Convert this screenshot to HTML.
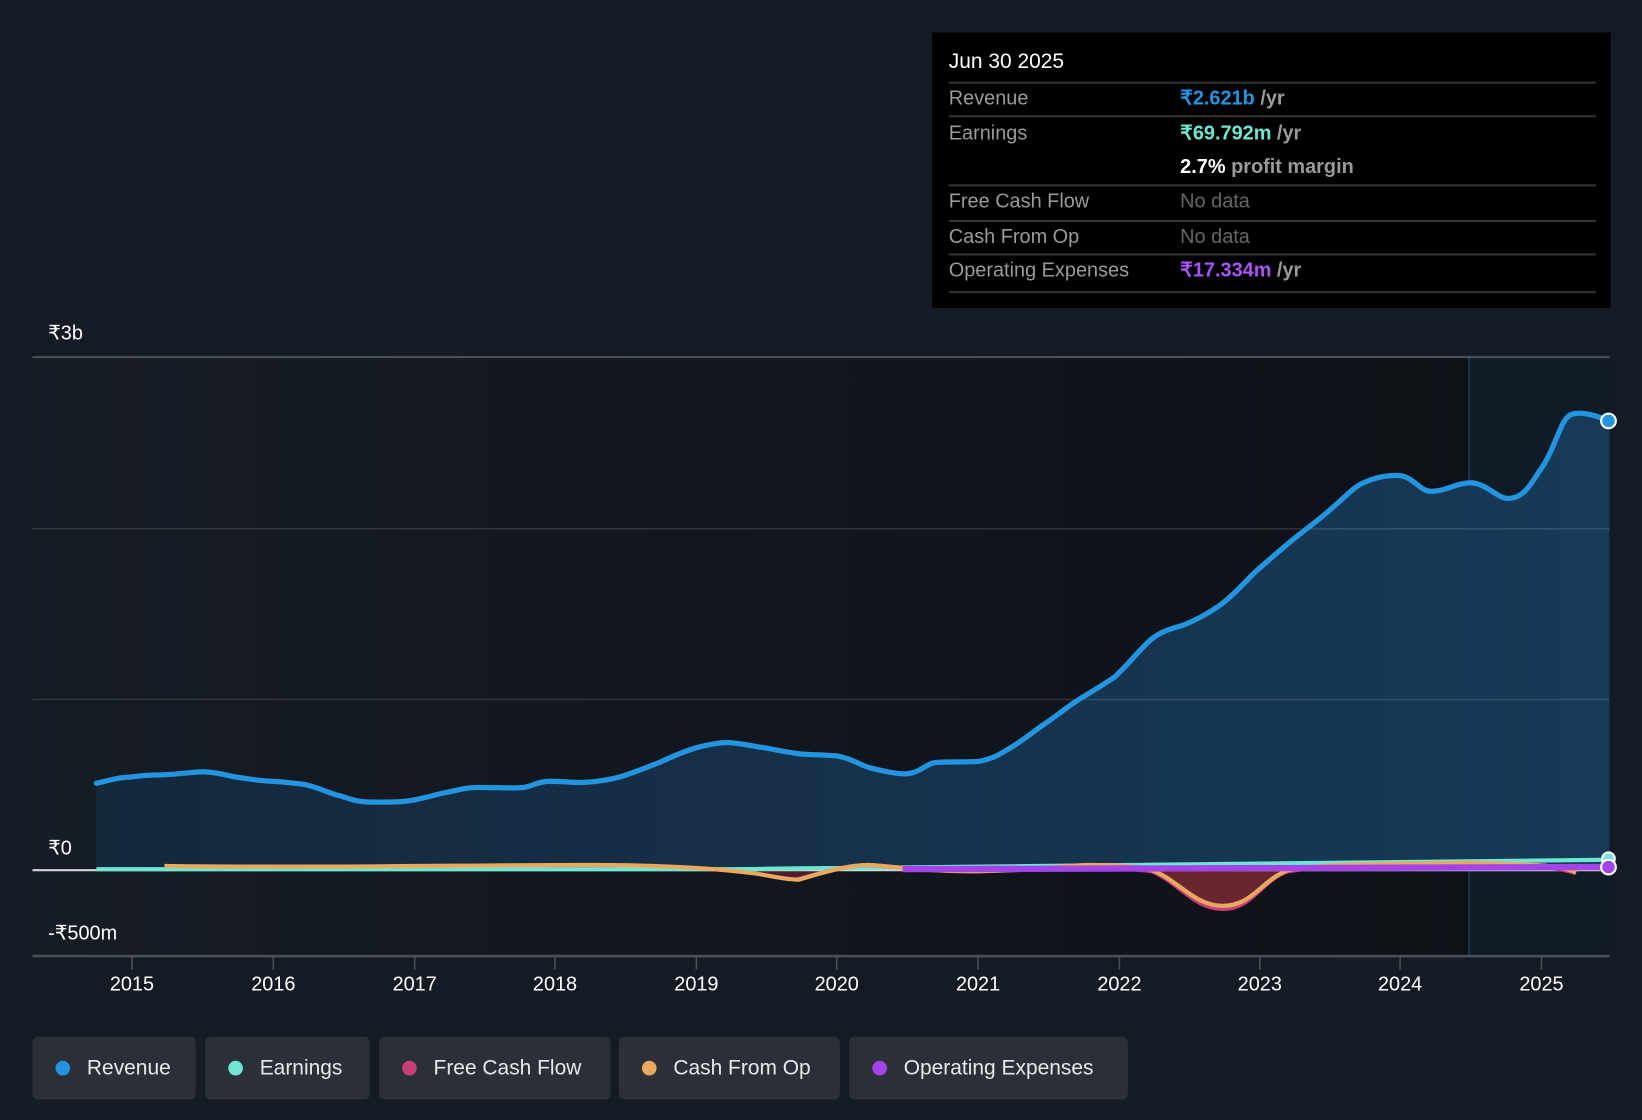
<!DOCTYPE html>
<html><head><meta charset="utf-8"><style>
html,body{margin:0;padding:0;background:#151b24;width:1642px;height:1120px;overflow:hidden}
#w{width:1568px;height:1070px;transform:scale(1.04719);transform-origin:0 0;position:relative;font-family:"Liberation Sans",sans-serif}
.tip{position:absolute;left:890px;top:31px;width:648px;height:263px;background:#000}
.row{position:absolute;left:16px;width:618px;border-top:2px solid #333;font-size:19px;color:#9a9a9a}
.row span{position:absolute;left:221px;font-weight:bold}
.row b{font-weight:bold}
.leg{position:absolute;top:990px;height:60px;background:#2a2f38;border-radius:5px;color:#e8e8e8;font-size:20px;line-height:60px}
.leg i{display:inline-block;width:14px;height:14px;border-radius:50%;margin:0 16px 0 22px;vertical-align:-1px}
</style></head><body><div id="w">
<svg width="1568" height="1070" style="position:absolute;left:0;top:0">
<defs>
<linearGradient id="pb" x1="0" x2="1"><stop offset="0" stop-color="#161c25"/><stop offset="1" stop-color="#0d1015"/></linearGradient>
<linearGradient id="fa" x1="0" x2="1"><stop offset="0" stop-color="#15283c"/><stop offset="1" stop-color="#163a58"/></linearGradient>
</defs>
<rect x="31" y="341" width="1506" height="572" fill="url(#pb)"/>
<rect x="1403" y="341" width="134" height="572" fill="#0f1c28"/>
<line x1="1403" y1="341" x2="1403" y2="913" stroke="#1c3448" stroke-width="2"/>
<path id="rev" d="M92,748 C105,745 115,742 125,742 C140,740 150,740 155,740 C175,739 185,737 195,737 C210,738 215,740 225,742 C240,744 250,746 260,746 C275,747 283,748 290,749 C305,752 315,758 325,760 C340,765 345,766 355,766 C375,766 385,766 395,764 C410,761 415,759 425,757 C440,754 445,752 455,752 C480,752 490,753 500,752 C510,750 515,746 525,746 C540,746 550,748 560,747 C575,746 585,744 595,741 C610,736 620,732 630,728 C645,721 655,717 665,714 C680,710 688,709 695,709 C710,710 720,713 730,714 C745,717 755,719 765,720 C780,721 790,721 800,722 C815,725 820,730 830,733 C845,737 855,739 865,739 C880,738 885,728 895,728 C915,727 925,728 935,727 C950,724 955,720 965,714 C980,705 985,700 995,693 C1010,683 1020,674 1035,665 C1050,656 1055,653 1065,646 C1080,632 1090,618 1100,610 C1110,602 1120,600 1130,597 C1145,591 1155,585 1165,578 C1180,567 1190,554 1200,545 C1215,532 1225,523 1235,515 C1250,503 1260,496 1270,487 C1285,474 1292,466 1300,462 C1315,455 1325,454 1335,454 C1350,455 1355,468 1365,469 C1380,470 1390,461 1405,461 C1420,462 1430,476 1440,476 C1455,476 1462,462 1470,450 C1485,430 1490,400 1500,396 C1510,392 1525,397 1537,402" fill="none"/>
<path d="M92,748 C105,745 115,742 125,742 C140,740 150,740 155,740 C175,739 185,737 195,737 C210,738 215,740 225,742 C240,744 250,746 260,746 C275,747 283,748 290,749 C305,752 315,758 325,760 C340,765 345,766 355,766 C375,766 385,766 395,764 C410,761 415,759 425,757 C440,754 445,752 455,752 C480,752 490,753 500,752 C510,750 515,746 525,746 C540,746 550,748 560,747 C575,746 585,744 595,741 C610,736 620,732 630,728 C645,721 655,717 665,714 C680,710 688,709 695,709 C710,710 720,713 730,714 C745,717 755,719 765,720 C780,721 790,721 800,722 C815,725 820,730 830,733 C845,737 855,739 865,739 C880,738 885,728 895,728 C915,727 925,728 935,727 C950,724 955,720 965,714 C980,705 985,700 995,693 C1010,683 1020,674 1035,665 C1050,656 1055,653 1065,646 C1080,632 1090,618 1100,610 C1110,602 1120,600 1130,597 C1145,591 1155,585 1165,578 C1180,567 1190,554 1200,545 C1215,532 1225,523 1235,515 C1250,503 1260,496 1270,487 C1285,474 1292,466 1300,462 C1315,455 1325,454 1335,454 C1350,455 1355,468 1365,469 C1380,470 1390,461 1405,461 C1420,462 1430,476 1440,476 C1455,476 1462,462 1470,450 C1485,430 1490,400 1500,396 C1510,392 1525,397 1537,402 L1537,831 L92,831 Z" fill="url(#fa)"/>
<line x1="31" y1="505" x2="1537" y2="505" stroke="#ffffff" stroke-opacity="0.12" stroke-width="1.5"/>
<line x1="31" y1="668" x2="1537" y2="668" stroke="#ffffff" stroke-opacity="0.12" stroke-width="1.5"/>
<line x1="31" y1="341" x2="1537" y2="341" stroke="#4a4e57" stroke-width="2"/>
<use href="#rev" stroke="#2394e0" stroke-width="5" stroke-linecap="round"/>
<path d="M1100,831 C1130,840 1140,866 1168,866 C1196,866 1205,840 1230,831 Z" fill="#6a2630"/>
<path d="M700,831 C730,835 745,840 763,840 C780,838 790,831 800,831 Z" fill="#4a2028"/>
<line x1="31" y1="831" x2="1537" y2="831" stroke="#d8d8d8" stroke-width="2"/>
<path d="M92,830 L700,830 C720,830 760,829 800,829 L1537,821" stroke="#6ee6d2" stroke-width="4" fill="none"/>
<path d="M760,840 C790,832 810,826 830,826 C850,827 880,832 930,832 C990,831 1060,826 1100,832 C1125,842 1140,868 1168,868 C1196,868 1205,840 1230,832 C1260,827 1300,827 1400,826 C1460,827 1490,828 1505,834" stroke="#c83f7a" stroke-width="4" fill="none"/>
<path d="M157,827 C300,829 450,826 560,826 C640,826 690,830 720,834 C740,837 750,840 763,840 C790,832 810,826 830,826 C850,827 880,832 930,832 C990,831 1020,826 1040,826 C1075,826 1090,828 1100,831 C1125,840 1140,865 1168,865 C1196,865 1205,840 1230,831 C1260,825 1300,825 1400,824 C1460,825 1490,826 1505,833" stroke="#e8a95e" stroke-width="4" fill="none"/>
<path d="M862,830 L1537,828" stroke="#a244e8" stroke-width="6" fill="none"/>
<circle cx="1536" cy="402" r="7" fill="#2394e0" stroke="#fff" stroke-width="2"/>
<circle cx="1536" cy="820" r="6" fill="#6ee6d2" stroke="#fff" stroke-width="2"/>
<circle cx="1536" cy="828" r="7" fill="#a244e8" stroke="#fff" stroke-width="2"/>
<line x1="31" y1="913" x2="1537" y2="913" stroke="#4a4e57" stroke-width="2.5"/>
<g stroke="#4a4e57" stroke-width="1.5">
<line x1="126" y1="913" x2="126" y2="926"/><line x1="261" y1="913" x2="261" y2="926"/><line x1="396" y1="913" x2="396" y2="926"/><line x1="530" y1="913" x2="530" y2="926"/><line x1="665" y1="913" x2="665" y2="926"/><line x1="799" y1="913" x2="799" y2="926"/><line x1="934" y1="913" x2="934" y2="926"/><line x1="1069" y1="913" x2="1069" y2="926"/><line x1="1203" y1="913" x2="1203" y2="926"/><line x1="1337" y1="913" x2="1337" y2="926"/><line x1="1472" y1="913" x2="1472" y2="926"/>
</g>
<g fill="#fff" font-size="19" text-anchor="middle" font-family="Liberation Sans,sans-serif">
<text x="126" y="946">2015</text><text x="261" y="946">2016</text><text x="396" y="946">2017</text><text x="530" y="946">2018</text><text x="665" y="946">2019</text><text x="799" y="946">2020</text><text x="934" y="946">2021</text><text x="1069" y="946">2022</text><text x="1203" y="946">2023</text><text x="1337" y="946">2024</text><text x="1472" y="946">2025</text>
</g>
<g fill="#fff" font-size="19" font-family="Liberation Sans,sans-serif">
<text x="46" y="324">₹3b</text><text x="46" y="816">₹0</text><text x="46" y="897">-₹500m</text>
</g>
</svg>
<div class="tip">
<div style="position:absolute;left:16px;top:17px;color:#fff;font-size:20px">Jun 30 2025</div>
<div class="row" style="top:47px;height:32px;line-height:30px">Revenue<span><b style="color:#2394e0">₹2.621b</b> /yr</span></div>
<div class="row" style="top:79px;height:66px;line-height:32px">Earnings<span><b style="color:#6ee6d2">₹69.792m</b> /yr<br><b style="color:#fff">2.7%</b> profit margin</span></div>
<div class="row" style="top:145px;height:34px;line-height:30px">Free Cash Flow<span style="color:#666;font-weight:normal">No data</span></div>
<div class="row" style="top:179px;height:32px;line-height:30px">Cash From Op<span style="color:#666;font-weight:normal">No data</span></div>
<div class="row" style="top:211px;height:34px;line-height:30px;border-bottom:2px solid #333">Operating Expenses<span><b style="color:#a855f7">₹17.334m</b> /yr</span></div>
</div>
<div class="leg" style="left:31px;width:156px"><i style="background:#2394e0"></i>Revenue</div>
<div class="leg" style="left:196px;width:157px"><i style="background:#6ee6d2"></i>Earnings</div>
<div class="leg" style="left:362px;width:221px"><i style="background:#c83f7a"></i>Free Cash Flow</div>
<div class="leg" style="left:591px;width:211px"><i style="background:#e8a95e"></i>Cash From Op</div>
<div class="leg" style="left:811px;width:266px"><i style="background:#a244e8"></i>Operating Expenses</div>
</div></body></html>
